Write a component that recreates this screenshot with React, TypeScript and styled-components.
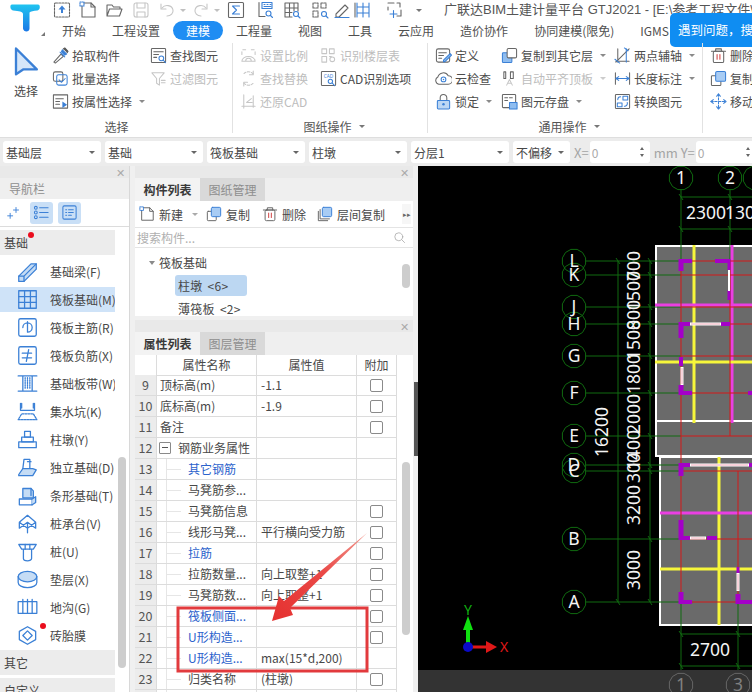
import React from 'react';
import styled, { createGlobalStyle } from 'styled-components';

const BLUE = '#3b80d6';
const MUTED = '#c6c6c6';

const GlobalStyle = createGlobalStyle`
  html, body { margin: 0; padding: 0; background: #fff; }
  body {
    font-family: "Noto Sans CJK SC", "Noto Sans", sans-serif;
    font-size: 12px;
    color: #484848;
  }
`;

const Glyph = styled.svg<{ $s: number; $c: string }>`
  width: ${(p) => p.$s}px;
  height: ${(p) => p.$s}px;
  flex: none;
  fill: none;
  stroke: ${(p) => p.$c};
  stroke-width: 1.1;
  stroke-linejoin: round;
  stroke-linecap: round;
`;

const fillB = { fill: '#3b80d6', stroke: 'none' };
const soft = { fill: '#c5dcf5' };
const grayS = { stroke: '#666' };

const icons: Record<string, React.ReactNode> = {
  upload: (<><rect x="1.5" y="2" width="15" height="14" rx="1" strokeDasharray="2 1.2" {...grayS} /><path d="M9 4.5 5.5 8.5H8V12h2V8.5h2.5z" {...fillB} /></>),
  newdoc: (<><path d="M5 2h7l4 4v10H3V5" {...grayS} /><path d="M12 2v4h4" {...grayS} /><rect x="1" y="1" width="4" height="4" strokeDasharray="1 1" /></>),
  folder: (<path d="M2 15V4h5l1.5 2H15v2M2 15l2.5-7H17l-2.5 7z" {...grayS} />),
  save: (<><rect x="2" y="2" width="14" height="14" rx="2" /><path d="M5 2v5h8V2M5 16v-5h8v5" /></>),
  undo: (<><path d="M4 7c3-4 10-3 11 2 .5 3-2 6-6 6" /><path d="M3 3v5h5" /></>),
  redo: (<><path d="M14 7c-3-4-10-3-11 2-.5 3 2 6 6 6" /><path d="M15 3v5h-5" /></>),
  sigma: (<><rect x="1.5" y="1.5" width="15" height="15" rx="1" {...grayS} /><path d="M12.5 5h-7L9.5 9l-4 4h7" /></>),
  boxgrid: (<><path d="M3 1.5v14h6" {...grayS} /><rect x="6" y="1.5" width="10" height="6" /><path d="M8 3.5h1M11 3.5h1M14 3.5h1M8 5.5h7" /><circle cx="12.5" cy="12.5" r="2.5" /><path d="m14.5 14.5 2 2" /></>),
  gridq: (<><path d="M9 16H2V2h13v8M2 7h13M2 11.5h7M6.5 2v14M11 2v8" {...grayS} /><circle cx="13" cy="13" r="2.5" /><path d="m15 15 2 2" /></>),
  dashq: (<><path d="M2 7V2h5v5zM10 2h5v5h-5zM2 10h5v6H2z" {...grayS} strokeDasharray="2 1" /><circle cx="13" cy="13" r="2.5" /><path d="m15 15 2 2" /></>),
  pencil: (<><path d="m3 13 9-9 3 3-9 9H3z" {...grayS} /><path d="M2 16.5h14" /></>),
  film: (<><path d="M3 2v14M15 2v14M9 2v14M3 6h12M3 12h12" /><path d="M1 2v14" {...grayS} /></>),
  frameplus: (<><path d="M3 2h6M12 2h3v4M16 9v6h-4M3 6v3" {...grayS} /><path d="M5 13h7M8.5 9.5v7" /></>),
  arrow: (<path d="M3 1.5 15.5 14H7.5L3 17z" fill="#d5e6f9" strokeWidth="1.4" />),
  pick: (<><path d="m2 16 7.5-8.5 2.5 2.5L3.5 17z" {...grayS} /><path d="m8.5 5.5 5 5M11 3l4.5 4.5-2 1-3.5-3.5z" fill="#3b80d6" /><path d="m12 2 1.5-1 3.5 3.5-1 1.5" fill="#555" stroke="#555" /></>),
  batch: (<><rect x="1.5" y="2" width="10" height="10" rx="2" {...grayS} /><rect x="5" y="5" width="11" height="11" rx="2" /><path d="m7.5 10.5 2.5 2.5 4-4" /></>),
  propsel: (<><rect x="1.5" y="2" width="15" height="14" {...grayS} /><path d="M4 6h8M4 9h4M4 12h4" {...grayS} /><path d="m11 9 5 3.5-5 3.5z" {...fillB} /></>),
  findel: (<><rect x="1.5" y="1.5" width="15" height="15" rx="1" {...grayS} /><path d="M4 5h10M4 8h5M4 11h3" {...grayS} /><circle cx="12" cy="12" r="2.5" /><path d="m14 14 2.5 2.5" /></>),
  filter: (<><path d="M2 3h13l-5 6v7l-3-2V9z" /><path d="M12 11h4M12 13.5h4" /></>),
  scale: (<><path d="M3 3h3M12 3h3M2 5v3M16 5v3" /><path d="M2 15a7 5 0 0 1 14 0zM6 15a3 3 0 0 1 6 0" /></>),
  laytable: (<><path d="M2 7V2h5v5zM10 2h5v5h-5zM2 16v-6h5v6zM10 10h2" /><circle cx="13" cy="13" r="2.5" /></>),
  replace: (<><path d="M14 4a7 7 0 0 0-10 0M4 14a7 7 0 0 0 10 0" strokeDasharray="2.5 1.5" /><path d="M14 1v4h-4M4 17v-4h4" /></>),
  cadq: (<><rect x="1.5" y="1.5" width="15" height="15" rx="1" {...grayS} /><text x="9" y="8" fontSize="5" textAnchor="middle" fill="#3b80d6" stroke="none" fontFamily="Noto Sans">CAD</text><circle cx="11" cy="12" r="2.3" /><path d="m13 14 2.5 2.5" /></>),
  restore: (<><path d="M2 14h14M4 2v14M14 3v12" /><path d="M12 6 7 10h6" /></>),
  define: (<><rect x="1.5" y="2" width="14" height="14" rx="2" {...grayS} /><path d="M4 6h8M4 9h5M4 12h3" {...grayS} /><path d="m9 14 7-7 1.5 1.5-7 7H9z" fill="#8dbbee" /></>),
  cloud: (<><path d="M4 15a4 4 0 0 1-1-7.5A6 6 0 0 1 14 6a4.500 4.500 0 0 1 0 9z" {...grayS} /><circle cx="9" cy="10" r="2.500" /><circle cx="9" cy="10" r=".8" {...fillB} /></>),
  lock: (<><path d="M5.500 8V5a3.500 3.500 0 0 1 7 0v3" {...grayS} /><rect x="2.500" y="8" width="13" height="9" rx="1" fill="#bcd7f4" /><circle cx="9" cy="12" r="1.300" {...fillB} /></>),
  copylayer: (<><rect x="1.500" y="6" width="10" height="10.500" rx="1" fill="#8fbdf0" /><rect x="6.500" y="1.500" width="10" height="10" rx="1.500" fill="#fff" {...grayS} /></>),
  align: (<><path d="M3 2v7h2V2zM10 2v7h3V2z" {...grayS} /><path d="M6 16l3-6 3 6M7 14h4" /></>),
  store: (<><rect x="1.500" y="1.500" width="14" height="14" rx="1" {...grayS} /><path d="M4 5h3M9 5h3M4 8h3" {...grayS} /><rect x="9" y="10" width="8" height="7" fill="#8fbdf0" /></>),
  axis: (<><path d="M2 15h14M4 2v14M16 2 2 16" {...grayS} /><path d="M13 2v14" /><path d="M1 13l5 4M11 1l4 3" /></>),
  dimlen: (<><path d="M1.500 3v12M16.500 3v12" {...grayS} /><path d="M2 9h14M2 9l3-2M2 9l3 2M16 9l-3-2M16 9l-3 2" /></>),
  convert: (<><rect x="1.500" y="1.500" width="15" height="15" rx="1" {...grayS} /><rect x="9.500" y="3.500" width="5" height="4" /><rect x="3.500" y="10.500" width="5" height="4" /><path d="M4 7a3 3 0 0 1 3-3M14 10a3 3 0 0 1-3 4" /></>),
  trash: (<><path d="M1.500 4.500h15M6 4.500V2h6v2.500" {...grayS} /><rect x="3.500" y="4.500" width="11" height="12" rx="1.500" {...grayS} /><path d="M7.500 8v5M10.500 8v5" stroke="#d04040" /></>),
  copy: (<><rect x="1.500" y="6" width="10" height="10.500" rx="1" {...grayS} /><rect x="6" y="1.500" width="10.500" height="10.500" rx="1.500" fill="#a8ccf4" /></>),
  move: (<><path d="M9 1v16M1 9h16" strokeDasharray="2.500 1.500" /><path d="M7 3.500 9 1l2 2.500M7 14.500 9 17l2-2.500M3.500 7 1 9l2.500 2M14.500 7 17 9l-2.500 2" /></>),
  layercopy: (<><path d="M1.500 6v10.500H12" {...grayS} /><path d="M3.500 4v10.500H14" {...grayS} /><rect x="6" y="1.500" width="10.500" height="10.500" rx="1.500" fill="#a8ccf4" /></>),
  search: (<><circle cx="8" cy="8" r="5.500" /><path d="m12 12 4 4" /></>),
  spark: (<path d="M5 10v6M2 13h6M12 3v6M9 6h6" />),
  list: (<><circle cx="3" cy="4" r="1.500" /><circle cx="3" cy="9" r="1.500" /><circle cx="3" cy="14" r="1.500" /><path d="M7 4h9M7 9h9M7 14h9" /></>),
  form: (<><rect x="2" y="2" width="14" height="14" rx="1.500" /><path d="M5 6h1M8 6h5M5 9h1M8 9h5M5 12h1M8 12h3" /></>),
  beam: (<><path d="M1.500 13 12 2.500h4.500V7L6 17.500H1.500z" {...soft} /><path d="M1.500 13H6v4.500M6 13 16.500 2.500" /></>),
  raft: (<><rect x="1.500" y="1.500" width="15" height="15" /><path d="M1.500 6.500h15M1.500 11.500h15M6.500 1.500v15M11.500 1.500v15" /></>),
  mainbar: (<><rect x="1.500" y="1.500" width="15" height="15" rx="1.500" /><path d="M9 4v9M5 9a4 4 0 0 1 8 0 4 4 0 0 1-4 4" /></>),
  negbar: (<><rect x="1.500" y="1.500" width="15" height="15" rx="1.500" /><path d="M4.500 7h8M4.500 11h8M10 4l-2 10" /></>),
  strip: (<><path d="M1 2.500h16M1 15.500h16M5 2.500v13M13 2.500v13" /><path d="M7 4v10M9 4v10M11 4v10" strokeDasharray="1 1" /></>),
  sump: (<><path d="M3 2v6h12V2" /><path d="M4 2v4M14 2v4" /><path d="M1 16h16L14 11H4z" strokeDasharray="1.500 1" /></>),
  pier: (<><rect x="6.500" y="2" width="5" height="5" /><rect x="4" y="7" width="10" height="4" /><rect x="1.500" y="11" width="15" height="5" /></>),
  indep: (<><path d="M6 2h5v8H5z" /><path d="M9 4h3M1.500 15 5 10h8.500l3 1-3 5H1.500z" {...soft} /></>),
  stripf: (<><path d="M5 3h7l2 2v6H5z" {...soft} /><path d="M12 3v6M2 12h11v5H2z" /><path d="m13 12 3-2v5l-3 2" {...soft} /></>),
  pilecap: (<path d="M9 2 16 8v5L9 8 2 13V8zM9 8v9M2 8l7 5 7-5" />),
  pile: (<><path d="M1.500 3H16.500L14 7H4zM5.500 7v8a3.500 2 0 0 0 7 0V7" /><path d="M7 3v4M11 3v4" /></>),
  cushion: (<><ellipse cx="9" cy="6.500" rx="8" ry="4.500" {...soft} /><path d="M1 6.500v5c0 2.500 3.500 4.500 8 4.500s8-2 8-4.500v-5" /></>),
  trench: (<><rect x="1" y="4" width="16" height="10" /><path d="M5 2v12M9 2v12M13 2v12" /></>),
  mould: (<><path d="M9 1.500 16 5.500v7L9 16.500 2 12.500v-7z" /><path d="M9 5 13 9 9 13 5 9z" /></>),
};

const Icon = ({ name, size = 17, color = BLUE }: { name: string; size?: number; color?: string }) => (
  <Glyph viewBox="0 0 18 18" $s={size} $c={color}>
    {icons[name]}
  </Glyph>
);

const Screen = styled.div`
  position: relative;
  width: 752px;
  height: 692px;
  overflow: hidden;
  background: #fff;
`;

/* ---------- title + tabs ---------- */
const TopBar = styled.header`
  display: flex;
  height: 41px;
`;
const LogoCell = styled.div`
  width: 49px;
  flex: none;
  position: relative;
  display: flex;
  justify-content: center;
  padding-top: 3px;
  box-sizing: border-box;
`;
const LogoCaret = styled.i`
  position: absolute;
  right: 4px;
  bottom: 5px;
  border-style: solid;
  border-width: 0 0 4px 4px;
  border-color: transparent transparent #777 transparent;
`;
const TopRows = styled.div`
  flex: 1;
  min-width: 0;
`;
const QuickRow = styled.div`
  display: flex;
  align-items: center;
  height: 20px;
  white-space: nowrap;
  padding-left: 4px;
`;
const QuickSlot = styled.span<{ $ml: number }>`
  display: flex;
  align-items: center;
  margin-left: ${(p) => p.$ml}px;
`;
const TinyCaret = styled.i<{ $c?: string; $ml?: number }>`
  display: inline-block;
  flex: none;
  margin-left: ${(p) => p.$ml ?? 4}px;
  border-style: solid;
  border-width: 3px 3px 0;
  border-color: ${(p) => p.$c ?? '#8a8a8a'} transparent transparent;
`;
const TitleText = styled.span`
  margin-left: 22px;
  font-family: "Liberation Sans", "Noto Sans CJK SC", sans-serif;
  font-size: 13px;
  line-height: 20px;
  color: #555;
`;
const TabRow = styled.nav`
  display: flex;
  height: 21px;
  white-space: nowrap;
`;
const Tab = styled.span<{ $active?: boolean }>`
  height: 19px;
  margin-top: 1px;
  padding: 0 13px;
  border-radius: 10px;
  font-size: 12px;
  line-height: 19px;
  color: ${(p) => (p.$active ? '#fff' : '#505050')};
  background: ${(p) => (p.$active ? '#1f8df3' : 'transparent')};
`;
const HelpTip = styled.div`
  position: absolute;
  left: 670px;
  top: 13px;
  width: 90px;
  height: 34px;
  border-radius: 5px 0 0 5px;
  background: #0f8df2;
  color: #fff;
  font-size: 12.5px;
  line-height: 34px;
  padding-left: 8px;
  white-space: nowrap;
  overflow: hidden;
`;

/* ---------- ribbon ---------- */
const Ribbon = styled.section`
  display: flex;
  height: 97px;
  border-bottom: 1px solid #dedede;
  box-sizing: border-box;
  background: #fff;
`;
const Group = styled.div<{ $w: number; $pad: number }>`
  flex: none;
  width: ${(p) => p.$w}px;
  padding-left: ${(p) => p.$pad}px;
  box-sizing: border-box;
  display: flex;
  flex-direction: column;
  position: relative;
  &::after {
    content: '';
    position: absolute;
    right: 0;
    top: 2px;
    bottom: 4px;
    width: 1px;
    background: #e2e2e2;
  }
`;
const GroupCols = styled.div`
  display: flex;
  height: 75px;
  padding-top: 3px;
  box-sizing: border-box;
`;
const GroupLabel = styled.div`
  height: 22px;
  display: flex;
  align-items: center;
  justify-content: center;
  gap: 5px;
  font-size: 12px;
  color: #555;
`;
const BigTool = styled.div`
  width: 52px;
  flex: none;
  display: flex;
  flex-direction: column;
  align-items: center;
  gap: 6px;
  font-size: 12px;
  padding-top: 2px;
`;
const ToolCol = styled.div<{ $w: number }>`
  flex: none;
  width: ${(p) => p.$w}px;
`;
const Tool = styled.div<{ $muted?: boolean }>`
  display: flex;
  align-items: center;
  height: 23px;
  gap: 3px;
  font-size: 12px;
  white-space: nowrap;
  color: ${(p) => (p.$muted ? '#bdbdbd' : '#4c4c4c')};
`;

type ToolDef = { icon: string; text: string; muted?: boolean; caret?: boolean };
type GroupDef = { w: number; pad: number; label: string; caret?: boolean; big?: boolean; cols: { w: number; tools: ToolDef[] }[] };

const ribbon: GroupDef[] = [
  {
    w: 233, pad: 0, label: '选择', big: true,
    cols: [
      { w: 98, tools: [{ icon: 'pick', text: '拾取构件' }, { icon: 'batch', text: '批量选择' }, { icon: 'propsel', text: '按属性选择', caret: true }] },
      { w: 80, tools: [{ icon: 'findel', text: '查找图元' }, { icon: 'filter', text: '过滤图元', muted: true }] },
    ],
  },
  {
    w: 195, pad: 7, label: '图纸操作', caret: true,
    cols: [
      { w: 80, tools: [{ icon: 'scale', text: '设置比例', muted: true }, { icon: 'replace', text: '查找替换', muted: true }, { icon: 'restore', text: '还原CAD', muted: true }] },
      { w: 106, tools: [{ icon: 'laytable', text: '识别楼层表', muted: true }, { icon: 'cadq', text: 'CAD识别选项' }] },
    ],
  },
  {
    w: 275, pad: 7, label: '通用操作', caret: true,
    cols: [
      { w: 66, tools: [{ icon: 'define', text: '定义' }, { icon: 'cloud', text: '云检查' }, { icon: 'lock', text: '锁定', caret: true }] },
      { w: 113, tools: [{ icon: 'copylayer', text: '复制到其它层', caret: true }, { icon: 'align', text: '自动平齐顶板', muted: true, caret: true }, { icon: 'store', text: '图元存盘', caret: true }] },
      { w: 85, tools: [{ icon: 'axis', text: '两点辅轴', caret: true }, { icon: 'dimlen', text: '长度标注', caret: true }, { icon: 'convert', text: '转换图元' }] },
    ],
  },
  {
    w: 60, pad: 7, label: '',
    cols: [{ w: 60, tools: [{ icon: 'trash', text: '删除' }, { icon: 'copy', text: '复制' }, { icon: 'move', text: '移动' }] }],
  },
];

/* ---------- selector bar ---------- */
const SelectBar = styled.section`
  display: flex;
  align-items: center;
  gap: 4px;
  height: 28px;
  padding-left: 3px;
  box-sizing: border-box;
  background: #ececec;
  white-space: nowrap;
`;
const SelectBox = styled.div<{ $w: number }>`
  flex: none;
  width: ${(p) => p.$w}px;
  height: 22px;
  padding: 0 6px 0 3px;
  box-sizing: border-box;
  border-radius: 3px;
  background: #fff;
  display: flex;
  align-items: center;
  justify-content: space-between;
  font-size: 12px;
`;
const AxisLabel = styled.span`
  color: #a4a4a4;
  font-size: 13px;
  margin: 0 -3px 0 0;
`;
const NumberBox = styled.div`
  flex: none;
  width: 60px;
  height: 22px;
  padding: 0 6px 0 2px;
  box-sizing: border-box;
  border-radius: 3px;
  background: #fff;
  color: #aaa;
  display: flex;
  align-items: center;
  justify-content: space-between;
`;
const Stepper = styled.span`
  display: flex;
  flex-direction: column;
  gap: 4px;
  & i {
    display: block;
    border-style: solid;
    border-width: 0 2.5px 3px;
    border-color: transparent transparent #666;
  }
  & i + i {
    border-width: 3px 2.5px 0;
    border-color: #666 transparent transparent;
  }
`;

/* ---------- main area ---------- */
const Main = styled.main`
  display: flex;
  height: 526px;
  background: #f0f0f0;
`;
const NavPanel = styled.aside`
  position: relative;
  flex: none;
  width: 130px;
  margin-right: 5px;
  background: #fff;
  border-right: 1px solid #d8d8d8;
  box-sizing: border-box;
  overflow: hidden;
`;
const CloseStrip = styled.div`
  height: 12px;
  background: #e9e9e9;
  display: flex;
  justify-content: flex-end;
  align-items: center;
  padding-right: 4px;
  color: #aaa;
  font-size: 11px;
  line-height: 12px;
`;
const NavTitle = styled.div`
  height: 21px;
  padding-left: 9px;
  background: #efefef;
  color: #8e8e8e;
  font-size: 12px;
  line-height: 21px;
`;
const NavTools = styled.div`
  display: flex;
  align-items: center;
  gap: 5px;
  height: 28px;
  padding-left: 2px;
  border-bottom: 1px solid #dcdcdc;
  box-sizing: border-box;
`;
const NavToolBtn = styled.span<{ $on?: boolean }>`
  width: 23px;
  height: 22px;
  border-radius: 3px;
  display: flex;
  align-items: center;
  justify-content: center;
  background: ${(p) => (p.$on ? '#c9dff6' : 'transparent')};
`;
const Category = styled.div`
  position: relative;
  width: 115px;
  height: 25px;
  margin-top: 3px;
  padding-left: 4px;
  box-sizing: border-box;
  background: #ececec;
  font-size: 12px;
  line-height: 25px;
  color: #444;
  white-space: nowrap;
  overflow: hidden;
`;
const RedDot = styled.i<{ $x: number; $y: number }>`
  position: absolute;
  left: ${(p) => p.$x}px;
  top: ${(p) => p.$y}px;
  width: 6px;
  height: 6px;
  border-radius: 50%;
  background: #ea0d1d;
`;
const NavList = styled.div`
  margin: 4px 0 -1px;
`;
const NavItem = styled.div<{ $on?: boolean }>`
  position: relative;
  display: flex;
  align-items: center;
  width: 115px;
  height: 25px;
  margin-bottom: 3px;
  padding-left: 17px;
  box-sizing: border-box;
  font-size: 12px;
  white-space: nowrap;
  overflow: hidden;
  background: ${(p) => (p.$on ? '#cfe3f8' : 'transparent')};
  & > span {
    margin-left: 12px;
  }
`;
const NavThumb = styled.i`
  position: absolute;
  left: 118px;
  top: 291px;
  width: 8px;
  height: 211px;
  border-radius: 4px;
  background: #cdcdcd;
`;

const MidColumn = styled.div`
  flex: none;
  width: 278px;
  margin-right: 1px;
  display: flex;
  flex-direction: column;
  gap: 4px;
`;
const Splitter = styled.div`
  flex: none;
  width: 4px;
  padding-top: 216px;
  box-sizing: border-box;
  & i {
    display: block;
    width: 4px;
    height: 74px;
    background: #555;
  }
`;
const Panel = styled.section<{ $h?: number }>`
  position: relative;
  background: #fff;
  overflow: hidden;
  ${(p) => (p.$h ? `height: ${p.$h}px; flex: none;` : 'flex: 1;')}
`;
const PanelTabs = styled.div`
  display: flex;
  height: 23px;
  background: #efefef;
`;
const PanelTab = styled.span<{ $on?: boolean }>`
  width: 65px;
  text-align: center;
  font-size: 12px;
  line-height: 23px;
  font-weight: ${(p) => (p.$on ? 700 : 400)};
  color: ${(p) => (p.$on ? '#3a3a3a' : '#8e8e8e')};
  background: ${(p) => (p.$on ? '#f3f3f3' : '#d9d9d9')};
`;
const ListTools = styled.div`
  display: flex;
  align-items: center;
  height: 27px;
  padding-left: 4px;
  border-bottom: 1px solid #e4e4e4;
  box-sizing: border-box;
  font-size: 12px;
  white-space: nowrap;
`;
const ListTool = styled.span<{ $ml?: number; $mr: number }>`
  display: flex;
  align-items: center;
  gap: 4px;
  margin-left: ${(p) => p.$ml ?? 0}px;
  margin-right: ${(p) => p.$mr}px;
`;
const MoreBtn = styled.span`
  margin-left: auto;
  margin-right: 2px;
  width: 9px;
  height: 20px;
  background: #f6f6f6;
  color: #666;
  font-size: 7px;
  line-height: 20px;
  text-align: center;
`;
const SearchRow = styled.div`
  display: flex;
  align-items: center;
  justify-content: space-between;
  height: 20px;
  padding: 0 7px 0 2px;
  border-bottom: 1px solid #e4e4e4;
  box-sizing: border-box;
  color: #b0b0b0;
  font-size: 12px;
`;
const TreeHead = styled.div`
  display: flex;
  align-items: center;
  gap: 4px;
  height: 21px;
  margin-top: 4px;
  padding-left: 14px;
  font-size: 12px;
`;
const TreeCaret = styled.i`
  border-style: solid;
  border-width: 4px 3px 0;
  border-color: #8a8a8a transparent transparent;
`;
const TreeLeaf = styled.div<{ $on?: boolean }>`
  width: 72px;
  height: 21px;
  margin: 2px 0 0 40px;
  padding-left: 3px;
  box-sizing: border-box;
  border-radius: 3px;
  font-size: 12px;
  line-height: 21px;
  white-space: nowrap;
  word-spacing: 2px;
  letter-spacing: 0.3px;
  background: ${(p) => (p.$on ? '#bcd7f2' : 'transparent')};
`;
const ListThumb = styled.i<{ $top: number; $h: number }>`
  position: absolute;
  left: 267px;
  top: ${(p) => p.$top}px;
  width: 8px;
  height: ${(p) => p.$h}px;
  border-radius: 4px;
  background: #cdcdcd;
`;

const TableHead = styled.div`
  display: grid;
  grid-template-columns: 22px 100px 100px 40px;
  height: 20px;
  font-size: 12px;
  line-height: 20px;
  text-align: center;
  & > span {
    border-right: 1px solid #dcdcdc;
    border-bottom: 1px solid #dcdcdc;
    box-sizing: border-box;
  }
`;
const Row = styled.div`
  display: grid;
  grid-template-columns: 22px 100px 100px 40px;
  height: 21px;
`;
const Cell = styled.div`
  position: relative;
  border-right: 1px solid #dcdcdc;
  border-bottom: 1px solid #dcdcdc;
  box-sizing: border-box;
  font-size: 12px;
  line-height: 20px;
  white-space: nowrap;
  overflow: hidden;
`;
const NumCell = styled(Cell)`
  background: #ececec;
  text-align: center;
  color: #555;
  font-size: 12.5px;
`;
const NameCell = styled(Cell)<{ $indent: number; $link?: boolean }>`
  padding-left: ${(p) => p.$indent}px;
  color: ${(p) => (p.$link ? '#2b62cc' : '#484848')};
  ${(p) =>
    p.$indent === 31
      ? `&::before { content: ''; position: absolute; left: 9px; top: 0; bottom: 0; border-left: 1px solid #e6e6e6; }
         &::after { content: ''; position: absolute; left: 9px; top: 10px; width: 15px; border-top: 1px solid #e6e6e6; }`
      : ''}
`;
const ValueCell = styled(Cell)`
  padding-left: 4px;
`;
const CheckCell = styled(Cell)`
  display: flex;
  align-items: center;
  justify-content: center;
`;
const CheckBox = styled.i`
  width: 13px;
  height: 13px;
  box-sizing: border-box;
  border: 1px solid #8a8a8a;
  border-radius: 2px;
`;
const Fold = styled.i`
  position: absolute;
  left: 2px;
  top: 4px;
  width: 12px;
  height: 12px;
  box-sizing: border-box;
  border: 1px solid #8a8a8a;
  border-radius: 1px;
  &::after {
    content: '';
    position: absolute;
    left: 2px;
    right: 2px;
    top: 4px;
    border-top: 1px solid #555;
  }
`;

const Canvas = styled.div`
  flex: 1;
  min-width: 0;
  background: #000;
`;
const CanvasSvg = styled.svg`
  display: block;
  width: 334px;
  height: 526px;
`;
const CadText = styled.text`
  font-family: "Noto Sans", sans-serif;
  font-size: 17.5px;
  fill: #f4f4f4;
`;
const Callout = styled.svg`
  position: absolute;
  left: 0;
  top: 0;
  width: 752px;
  height: 692px;
  pointer-events: none;
`;

const quick: { name: string; ml: number; color?: string; caret?: boolean }[] = [
  { name: 'upload', ml: 0 },
  { name: 'newdoc', ml: 8 },
  { name: 'folder', ml: 8 },
  { name: 'save', ml: 9, color: MUTED },
  { name: 'undo', ml: 8, color: MUTED, caret: true },
  { name: 'redo', ml: 6, color: MUTED, caret: true },
  { name: 'sigma', ml: 7 },
  { name: 'boxgrid', ml: 11 },
  { name: 'gridq', ml: 9 },
  { name: 'dashq', ml: 10 },
  { name: 'pencil', ml: 4 },
  { name: 'film', ml: 3 },
  { name: 'frameplus', ml: 13 },
];

const tabs = ['开始', '工程设置', '建模', '工程量', '视图', '工具', '云应用', '造价协作', '协同建模(限免)', 'IGMS'];

const navItems: { icon: string; text: string; on?: boolean; dot?: boolean }[] = [
  { icon: 'beam', text: '基础梁(F)' },
  { icon: 'raft', text: '筏板基础(M)', on: true },
  { icon: 'mainbar', text: '筏板主筋(R)' },
  { icon: 'negbar', text: '筏板负筋(X)' },
  { icon: 'strip', text: '基础板带(W)' },
  { icon: 'sump', text: '集水坑(K)' },
  { icon: 'pier', text: '柱墩(Y)' },
  { icon: 'indep', text: '独立基础(D)' },
  { icon: 'stripf', text: '条形基础(T)' },
  { icon: 'pilecap', text: '桩承台(V)' },
  { icon: 'pile', text: '桩(U)' },
  { icon: 'cushion', text: '垫层(X)' },
  { icon: 'trench', text: '地沟(G)' },
  { icon: 'mould', text: '砖胎膜', dot: true },
];

type PropRow = { n: number; name: string; value?: string; check?: boolean; link?: boolean; level?: 0 | 1 | 2 };
const props: PropRow[] = [
  { n: 9, name: '顶标高(m)', value: '-1.1', check: true },
  { n: 10, name: '底标高(m)', value: '-1.9', check: true },
  { n: 11, name: '备注', check: true },
  { n: 12, name: '钢筋业务属性', level: 1 },
  { n: 13, name: '其它钢筋', link: true, level: 2 },
  { n: 14, name: '马凳筋参...', level: 2 },
  { n: 15, name: '马凳筋信息', check: true, level: 2 },
  { n: 16, name: '线形马凳...', value: '平行横向受力筋', check: true, level: 2 },
  { n: 17, name: '拉筋', link: true, check: true, level: 2 },
  { n: 18, name: '拉筋数量...', value: '向上取整+1', check: true, level: 2 },
  { n: 19, name: '马凳筋数...', value: '向上取整+1', check: true, level: 2 },
  { n: 20, name: '筏板侧面...', link: true, check: true, level: 2 },
  { n: 21, name: 'U形构造...', link: true, check: true, level: 2 },
  { n: 22, name: 'U形构造...', value: 'max(15*d,200)', link: true, level: 2 },
  { n: 23, name: '归类名称', value: '(柱墩)', check: true, level: 2 },
  { n: 24, name: '', level: 2 },
];

/* drawing data, in page coordinates */
const GREEN = '#106a10';
const RED = '#d41818';
const YELLOW = '#f6f63a';
const MAGENTA = '#ea3fe2';
const PURPLE = '#a400c8';
const WHITE = '#fff';
const PINK = '#f2a8b8';

const axesH: [string, number][] = [
  ['L', 261], ['K', 275], ['J', 307], ['H', 324], ['G', 356], ['F', 393],
  ['E', 436], ['D', 465], ['C', 471], ['B', 539], ['A', 602],
];
const spans: [string, number][] = [
  ['700', 266], ['1500', 291], ['800', 315], ['1500', 340], ['1800', 374],
  ['2000', 414], ['1400', 450], ['300', 468], ['3200', 505], ['3000', 570],
];
const segments: [number, number, number, number, string, number][] = [
  [694, 245, 694, 423, YELLOW, 3],
  [732, 245, 732, 423, MAGENTA, 3],
  [655, 305, 752, 305, MAGENTA, 3],
  [655, 362, 752, 362, YELLOW, 3],
  [719, 457, 719, 625, YELLOW, 3],
  [660, 513, 752, 513, MAGENTA, 3],
  [660, 569, 752, 569, YELLOW, 3],
  [681, 261, 752, 261, RED, 1],
  [681, 275, 752, 275, RED, 1],
  [681, 307, 752, 307, RED, 1],
  [681, 324, 752, 324, RED, 1],
  [681, 356, 752, 356, RED, 1],
  [681, 393, 752, 393, RED, 1],
  [681, 436, 752, 436, RED, 1],
  [681, 465, 752, 465, RED, 1],
  [681, 471, 752, 471, RED, 1],
  [681, 539, 752, 539, RED, 1],
  [681, 602, 752, 602, RED, 1],
  [681, 260, 681, 602, RED, 1],
  [730, 260, 730, 436, RED, 1],
  [738, 471, 738, 602, RED, 1],
  // wall stubs
  [680, 261, 692, 261, PURPLE, 4],
  [681, 259, 681, 271, PURPLE, 5],
  [715, 261, 730, 261, PURPLE, 4],
  [729, 259, 729, 270, PURPLE, 3],
  [729, 290, 729, 300, PURPLE, 3],
  [680, 324, 690, 324, PURPLE, 4],
  [681, 322, 681, 338, PURPLE, 5],
  [721, 324, 730, 324, PURPLE, 4],
  [681, 357, 681, 366, PURPLE, 4],
  [681, 385, 681, 395, PURPLE, 5],
  [680, 393, 692, 393, PURPLE, 4],
  [748, 393, 752, 393, PURPLE, 4],
  [680, 465, 690, 465, PURPLE, 4],
  [681, 463, 681, 476, PURPLE, 5],
  [749, 465, 752, 465, PURPLE, 4],
  [681, 520, 681, 540, PURPLE, 5],
  [680, 538, 690, 538, PURPLE, 4],
  [707, 538, 717, 538, PURPLE, 4],
  [681, 592, 681, 604, PURPLE, 5],
  [680, 602, 692, 602, PURPLE, 4],
  [738, 594, 738, 604, PURPLE, 5],
  [737, 602, 752, 602, PURPLE, 4],
  [738, 567, 738, 573, PURPLE, 3],
  // openings
  [690, 324, 721, 324, WHITE, 3],
  [691, 324, 720, 324, PINK, 1],
  [729, 270, 729, 291, WHITE, 2],
  [682, 367, 682, 385, WHITE, 3],
  [682, 368, 682, 384, PINK, 1],
  [690, 465, 749, 465, WHITE, 3],
  [691, 465, 748, 465, PINK, 1],
  [690, 538, 706, 538, WHITE, 3],
  [691, 538, 705, 538, PINK, 1],
  [738, 573, 738, 591, WHITE, 3],
  [738, 574, 738, 590, PINK, 1],
];

const octagon = (cx: number, cy: number, r = 12) =>
  Array.from({ length: 12 }, (_, i) => {
    const a = (Math.PI / 6) * i + Math.PI / 12;
    return `${(cx + r * Math.cos(a)).toFixed(1)},${(cy + r * Math.sin(a)).toFixed(1)}`;
  }).join(' ');

const Tick = ({ x, y }: { x: number; y: number }) => (
  <path d={`M${x - 2} ${y - 3}L${x + 2} ${y + 3}`} stroke={GREEN} strokeWidth={1} fill="none" />
);

const CadDrawing = () => (
  <CanvasSvg viewBox="418 166 334 526">
    <rect x="656" y="246" width="100" height="210" fill="#6a6a6a" stroke={WHITE} strokeWidth="2" />
    <path d="M656 421H752" stroke={WHITE} strokeWidth="2" />
    <rect x="660" y="457" width="100" height="168" fill="#6a6a6a" stroke={WHITE} strokeWidth="2" />
    <path d="M681 190V261M730 190V261M618 261V602M650 261V602M681 197H752M681 229H752" stroke={GREEN} strokeWidth="1" fill="none" />
    <path d="M681 602V670M738 602V670M681 634H752M681 666H752" stroke={GREEN} strokeWidth="1" fill="none" />
    {axesH.map(([name, y]) => (
      <g key={name}>
        <path d={`M586 ${y}H681`} stroke={GREEN} strokeWidth="1" />
        <Tick x={650} y={y} />
        <polygon points={octagon(574, y)} fill="none" stroke={GREEN} />
      </g>
    ))}
    <Tick x={618} y={261} />
    <Tick x={618} y={602} />
    <Tick x={681} y={197} />
    <Tick x={730} y={197} />
    <Tick x={681} y={229} />
    <Tick x={730} y={229} />
    <Tick x={681} y={634} />
    <Tick x={738} y={634} />
    <Tick x={681} y={666} />
    <Tick x={738} y={666} />
    {segments.map(([x1, y1, x2, y2, color, width], i) => (
      <line key={i} x1={x1} y1={y1} x2={x2} y2={y2} stroke={color} strokeWidth={width} />
    ))}
    {axesH.map(([name, y]) => (
      <CadText key={name} x={574} y={y + 6} textAnchor="middle">{name}</CadText>
    ))}
    {spans.map(([value, y], i) => (
      <CadText key={i} x={640} y={y} textAnchor="middle" transform={`rotate(-90 640 ${y})`}>{value}</CadText>
    ))}
    <CadText x={608} y={432} textAnchor="middle" transform="rotate(-90 608 432)">16200</CadText>
    <polygon points={octagon(681, 178)} fill="none" stroke={GREEN} />
    <polygon points={octagon(730, 178)} fill="none" stroke={GREEN} />
    <polygon points={octagon(755, 178)} fill="none" stroke={GREEN} />
    <CadText x={681} y={184} textAnchor="middle">1</CadText>
    <CadText x={730} y={184} textAnchor="middle">2</CadText>
    <CadText x={686} y={219}>2300</CadText>
    <CadText x={725} y={219}>130</CadText>
    <CadText x={690} y={656}>2700</CadText>
    <path d="M468 647V626" stroke="#10e010" strokeWidth="4" />
    <path d="M463 630 468 616 473 630z" fill="#10e010" />
    <path d="M472 647H487" stroke="#e01818" strokeWidth="3" />
    <path d="M486 641 497 647 486 653z" fill="#e01818" />
    <circle cx="468" cy="647" r="5" fill="#0a0ac8" />
    <CadText x={468} y={615} textAnchor="middle" style={{ fill: '#10b010', fontSize: 14 }}>Y</CadText>
    <CadText x={504} y={652} textAnchor="middle" style={{ fill: '#e01818', fontSize: 14 }}>X</CadText>
    <rect x="418" y="670" width="334" height="22" fill="#333" />
    <polygon points={octagon(681, 685)} fill="none" stroke="#666" />
    <polygon points={octagon(738, 685)} fill="none" stroke="#666" />
    <CadText x={681} y={691} textAnchor="middle" style={{ fill: '#808080' }}>1</CadText>
    <CadText x={738} y={691} textAnchor="middle" style={{ fill: '#808080' }}>3</CadText>
  </CanvasSvg>
);

const App = () => (
  <Screen>
    <GlobalStyle />
    <TopBar>
      <LogoCell>
        <svg width="32" height="30" viewBox="0 0 32 30">
          <defs>
            <linearGradient id="logoFill" x1="0" y1="0" x2="0" y2="1">
              <stop offset="0" stopColor="#20c4f0" />
              <stop offset="1" stopColor="#1a78e6" />
            </linearGradient>
          </defs>
          <path d="M3 1.500h26c2.500 0 2.500 5.500-.5 6-4 .5-7 .5-8 2v16c0 4-6 4-6.500 0V11c0-2.500-4-3-10-3.500-3-.5-3.500-6-1-6z" fill="url(#logoFill)" />
        </svg>
        <LogoCaret />
      </LogoCell>
      <TopRows>
        <QuickRow>
          {quick.map((q) => (
            <QuickSlot key={q.name} $ml={q.ml}>
              <Icon name={q.name} size={18} color={q.color} />
              {q.caret && <TinyCaret $c="#c0c0c0" />}
            </QuickSlot>
          ))}
          <TinyCaret $ml={13} $c="#777" />
          <TitleText>广联达BIM土建计量平台 GTJ2021 - [E:\参考工程文件\通用</TitleText>
        </QuickRow>
        <TabRow>
          {tabs.map((t) => (
            <Tab key={t} $active={t === '建模'}>{t}</Tab>
          ))}
        </TabRow>
      </TopRows>
    </TopBar>
    <HelpTip>遇到问题，搜一搜</HelpTip>

    <Ribbon>
      {ribbon.map((g) => (
        <Group key={g.w} $w={g.w} $pad={g.pad}>
          <GroupCols>
            {g.big && (
              <BigTool>
                <Icon name="arrow" size={30} />
                选择
              </BigTool>
            )}
            {g.cols.map((c) => (
              <ToolCol key={c.tools[0].text} $w={c.w}>
                {c.tools.map((t) => (
                  <Tool key={t.text} $muted={t.muted}>
                    <Icon name={t.icon} color={t.muted ? MUTED : BLUE} />
                    {t.text}
                    {t.caret && <TinyCaret $c={t.muted ? '#ccc' : '#8a8a8a'} />}
                  </Tool>
                ))}
              </ToolCol>
            ))}
          </GroupCols>
          <GroupLabel>
            {g.label}
            {g.caret && <TinyCaret $c="#777" $ml={2} />}
          </GroupLabel>
        </Group>
      ))}
    </Ribbon>

    <SelectBar>
      {[['基础层', 98], ['基础', 98], ['筏板基础', 98], ['柱墩', 98], ['分层1', 98], ['不偏移', 57]].map(([t, w]) => (
        <SelectBox key={t} $w={w as number}>
          {t}
          <TinyCaret $c="#666" />
        </SelectBox>
      ))}
      <AxisLabel>X=</AxisLabel>
      <NumberBox>
        0
        <Stepper><i /><i /></Stepper>
      </NumberBox>
      <AxisLabel>mm Y=</AxisLabel>
      <NumberBox>
        0
        <Stepper><i /><i /></Stepper>
      </NumberBox>
    </SelectBar>

    <Main>
      <NavPanel>
        <CloseStrip>✕</CloseStrip>
        <NavTitle>导航栏</NavTitle>
        <NavTools>
          <NavToolBtn><Icon name="spark" size={15} /></NavToolBtn>
          <NavToolBtn $on><Icon name="list" size={17} /></NavToolBtn>
          <NavToolBtn $on><Icon name="form" size={17} /></NavToolBtn>
        </NavTools>
        <Category>
          基础
          <RedDot $x={28} $y={2} />
        </Category>
        <NavList>
          {navItems.map((item) => (
            <NavItem key={item.text} $on={item.on}>
              <Icon name={item.icon} size={21} />
              <span>{item.text}</span>
              {item.dot && <RedDot $x={40} $y={0} />}
            </NavItem>
          ))}
        </NavList>
        <Category>其它</Category>
        <Category>自定义</Category>
        <NavThumb />
      </NavPanel>

      <MidColumn>
        <Panel $h={150}>
          <CloseStrip>✕</CloseStrip>
          <PanelTabs>
            <PanelTab $on>构件列表</PanelTab>
            <PanelTab>图纸管理</PanelTab>
          </PanelTabs>
          <ListTools>
            <ListTool $mr={6}>
              <Icon name="newdoc" size={16} />
              新建
            </ListTool>
            <TinyCaret $c="#aaa" $ml={3} />
            <ListTool $ml={8} $mr={12}>
              <Icon name="copy" size={16} />
              复制
            </ListTool>
            <ListTool $mr={11}>
              <Icon name="trash" size={16} />
              删除
            </ListTool>
            <ListTool $mr={0}>
              <Icon name="layercopy" size={16} />
              层间复制
            </ListTool>
            <MoreBtn>▸▸</MoreBtn>
          </ListTools>
          <SearchRow>
            搜索构件...
            <Icon name="search" size={13} color="#a8a8a8" />
          </SearchRow>
          <TreeHead>
            <TreeCaret />
            筏板基础
          </TreeHead>
          <TreeLeaf $on>柱墩 &lt;6&gt;</TreeLeaf>
          <TreeLeaf>薄筏板 &lt;2&gt;</TreeLeaf>
          <ListThumb $top={98} $h={24} />
        </Panel>
        <Panel>
          <CloseStrip>✕</CloseStrip>
          <PanelTabs>
            <PanelTab $on>属性列表</PanelTab>
            <PanelTab>图层管理</PanelTab>
          </PanelTabs>
          <TableHead>
            <span />
            <span>属性名称</span>
            <span>属性值</span>
            <span>附加</span>
          </TableHead>
          {props.map((r) => (
            <Row key={r.n}>
              <NumCell>{r.n}</NumCell>
              <NameCell $indent={r.level === 2 ? 31 : r.level === 1 ? 21 : 3} $link={r.link}>
                {r.level === 1 && <Fold />}
                {r.name}
              </NameCell>
              <ValueCell>{r.value}</ValueCell>
              <CheckCell>{r.check && <CheckBox />}</CheckCell>
            </Row>
          ))}
          <ListThumb $top={142} $h={173} />
        </Panel>
      </MidColumn>
      <Splitter><i /></Splitter>
      <Canvas>
        <CadDrawing />
      </Canvas>
    </Main>

    <Callout viewBox="0 0 752 692">
      <defs>
        <linearGradient id="arrowFill" x1="1" y1="0" x2="0" y2="1">
          <stop offset="0" stopColor="#f29a90" />
          <stop offset="0.45" stopColor="#ea4a48" />
          <stop offset="1" stopColor="#e5302f" />
        </linearGradient>
      </defs>
      <rect x="178" y="608" width="189" height="63" fill="none" stroke="#e23a3d" strokeWidth="3" />
      <polygon points="272,621 293,615 290,608 367,533 284,601 279,596" fill="url(#arrowFill)" />
    </Callout>
  </Screen>
);

export default App;
